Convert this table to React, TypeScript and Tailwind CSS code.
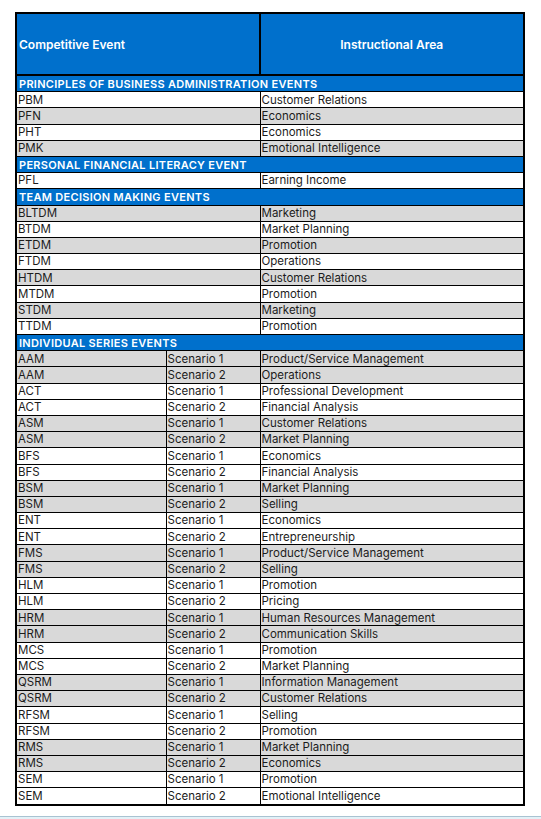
import React from 'react';

type Row =
  | { kind: 'section'; title: string }
  | { kind: 'pair'; code: string; area: string; shade: boolean }
  | { kind: 'scenario'; code: string; scenario: string; area: string; shade: boolean };

const pba: [string, string][] = [
  ['PBM', 'Customer Relations'],
  ['PFN', 'Economics'],
  ['PHT', 'Economics'],
  ['PMK', 'Emotional Intelligence'],
];

const tdm: [string, string][] = [
  ['BLTDM', 'Marketing'],
  ['BTDM', 'Market Planning'],
  ['ETDM', 'Promotion'],
  ['FTDM', 'Operations'],
  ['HTDM', 'Customer Relations'],
  ['MTDM', 'Promotion'],
  ['STDM', 'Marketing'],
  ['TTDM', 'Promotion'],
];

// each event has two scenarios, shading alternates per event
const series: [string, string, string][] = [
  ['AAM', 'Product/Service Management', 'Operations'],
  ['ACT', 'Professional Development', 'Financial Analysis'],
  ['ASM', 'Customer Relations', 'Market Planning'],
  ['BFS', 'Economics', 'Financial Analysis'],
  ['BSM', 'Market Planning', 'Selling'],
  ['ENT', 'Economics', 'Entrepreneurship'],
  ['FMS', 'Product/Service Management', 'Selling'],
  ['HLM', 'Promotion', 'Pricing'],
  ['HRM', 'Human Resources Management', 'Communication Skills'],
  ['MCS', 'Promotion', 'Market Planning'],
  ['QSRM', 'Information Management', 'Customer Relations'],
  ['RFSM', 'Selling', 'Promotion'],
  ['RMS', 'Market Planning', 'Economics'],
  ['SEM', 'Promotion', 'Emotional Intelligence'],
];

const rows: Row[] = [
  { kind: 'section', title: 'PRINCIPLES OF BUSINESS ADMINISTRATION EVENTS' },
  ...pba.map(([code, area], i) => ({ kind: 'pair' as const, code, area, shade: i % 2 === 1 })),
  { kind: 'section', title: 'PERSONAL FINANCIAL LITERACY EVENT' },
  { kind: 'pair', code: 'PFL', area: 'Earning Income', shade: false },
  { kind: 'section', title: 'TEAM DECISION MAKING EVENTS' },
  ...tdm.map(([code, area], i) => ({ kind: 'pair' as const, code, area, shade: i % 2 === 0 })),
  { kind: 'section', title: 'INDIVIDUAL SERIES EVENTS' },
  ...series.flatMap(([code, a1, a2], i) => [
    { kind: 'scenario' as const, code, scenario: 'Scenario 1', area: a1, shade: i % 2 === 0 },
    { kind: 'scenario' as const, code, scenario: 'Scenario 2', area: a2, shade: i % 2 === 0 },
  ]),
];

function TableRow({ row, last }: { row: Row; last: boolean }) {
  const base = `flex h-[16.2px] ${last ? '' : 'border-b-[1.5px] border-black'}`;

  if (row.kind === 'section') {
    return (
      <div className={`${base} items-center bg-[#0070cc] pl-[2px] pt-[1px] text-[11px] font-semibold tracking-[0.3px] text-white`}>
        {row.title}
      </div>
    );
  }

  const bg = row.shade ? 'bg-[#d9d9d9]' : 'bg-white';

  if (row.kind === 'pair') {
    return (
      <div className={`${base} ${bg}`}>
        <div className="flex w-[243.5px] items-center border-r-[1.5px] border-black pl-[1px] pt-[1px]">{row.code}</div>
        <div className="flex flex-1 items-center pl-[1px] pt-[1px]">{row.area}</div>
      </div>
    );
  }

  return (
    <div className={`${base} ${bg}`}>
      <div className="flex w-[149.5px] items-center border-r-[1.5px] border-black pl-[1px] pt-[1px]">{row.code}</div>
      <div className="flex w-[94px] items-center border-r-[1.5px] border-black pl-[1px] pt-[1px]">{row.scenario}</div>
      <div className="flex flex-1 items-center pl-[1px] pt-[1px]">{row.area}</div>
    </div>
  );
}

export default function App() {
  return (
    <div className="relative h-[819px] w-[541px] overflow-hidden bg-white font-['Inter',sans-serif] text-[11.5px] leading-none text-[#1c1c1c]">
      <div className="ml-[15px] mt-[12px] w-[510px] border-2 border-black">
        <div className="flex h-[62px] border-b-2 border-black bg-[#0070cc] font-semibold text-white">
          <div className="flex w-[243.5px] items-center border-r-2 border-black pl-[2px] pt-[2px] text-[12px]">
            Competitive Event
          </div>
          <div className="flex flex-1 items-center justify-center pt-[2px] text-[12px]">Instructional Area</div>
        </div>
        {rows.map((row, i) => (
          <TableRow key={i} row={row} last={i === rows.length - 1} />
        ))}
      </div>
      <div className="absolute bottom-0 left-0 h-[3px] w-full border-t border-[#a9c3d2] bg-[#e3f1f7]" />
    </div>
  );
}
